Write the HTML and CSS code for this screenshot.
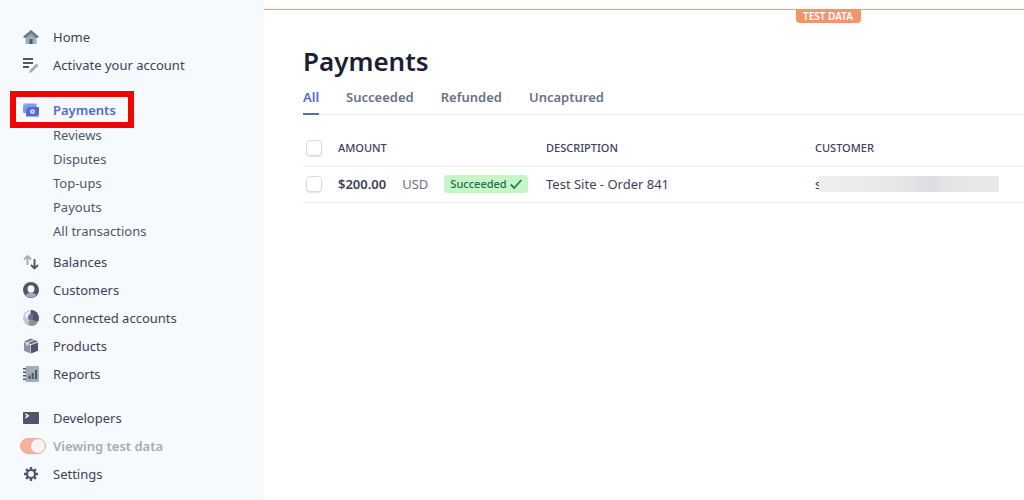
FILE: index.html
```html
<!DOCTYPE html>
<html lang="en">
<head>
<meta charset="utf-8">
<meta name="viewport" content="width=device-width, initial-scale=1">
<title>Payments</title>
<link rel="stylesheet" href="styles.css">
</head>
<body>
<div class="app">
  <nav class="sidebar" aria-label="Main">
    <ul class="group">
      <li><a class="item" href="#home">
        <svg class="icon" viewBox="0 0 16 16"><path fill="#a3acb9" d="M2.500 7h11v8h-11z"/><path fill="#697386" d="M8 1 15.500 7.200v1.600h-2.300L8 4.500 2.800 8.800H.5V7.200z"/><path fill="#4f566b" d="M6.500 15v-5h3v5z"/><path fill="#8792a2" d="M8 4.500l5.200 4.300h-2L8 6.500 4.800 8.800h-2z"/></svg>
        Home</a></li>
      <li><a class="item" href="#activate">
        <svg class="icon" viewBox="0 0 16 16"><path fill="#4f566b" d="M0 1h10v2H0zM0 5h10v2H0zM0 9h6v2H0z"/><path fill="#a3acb9" d="M13.500 6.500l2 2-6.500 6.500-3 1 1-3z"/></svg>
        Activate your account</a></li>
    </ul>
    <ul class="group">
      <li class="highlight"><a class="item item-active" href="#payments" aria-current="page">
        <svg class="icon" viewBox="0 0 16 16"><rect x="0" y="1.500" width="13.500" height="9.500" rx="1" fill="#7f9cf0"/><path fill="#b3c6fa" d="M0 1.500h3L0 4.500z"/><rect x="3" y="5" width="13" height="9.500" rx="1" fill="#5469d4"/><circle cx="9.500" cy="9.700" r="2.400" fill="#d6e0ff"/><circle cx="9.500" cy="9.700" r=".8" fill="#5469d4"/><path fill="#8ba4f3" d="M3 5h2.500L3 7.500zM16 14.500h-2.500l2.500-2.500z"/></svg>
        Payments</a></li>
      <li><a class="subitem" href="#reviews">Reviews</a></li>
      <li><a class="subitem" href="#disputes">Disputes</a></li>
      <li><a class="subitem" href="#topups">Top-ups</a></li>
      <li><a class="subitem" href="#payouts">Payouts</a></li>
      <li><a class="subitem" href="#transactions">All transactions</a></li>
    </ul>
    <ul class="group group-near">
      <li><a class="item" href="#balances">
        <svg class="icon" viewBox="0 0 16 16" fill="none" stroke-width="1.900"><path stroke="#a3acb9" d="M4.500 11V2M1 5.500 4.500 2 8 5.500"/><path stroke="#4f566b" d="M11.500 5v9.500M8 11l3.500 3.500L15 11"/></svg>
        Balances</a></li>
      <li><a class="item" href="#customers">
        <svg class="icon" viewBox="0 0 16 16"><circle cx="8" cy="8" r="8" fill="#4f566b"/><path fill="#a3acb9" d="M2.500 13.300C3.500 11.600 5.500 11 8 11s4.500.6 5.500 2.300A8 8 0 0 1 2.500 13.300z"/><ellipse cx="8" cy="7" rx="3.400" ry="3.700" fill="#f7fafc"/></svg>
        Customers</a></li>
      <li><a class="item" href="#accounts">
        <svg class="icon" viewBox="0 0 16 16"><circle cx="8" cy="8" r="8" fill="#c1c9d2"/><path fill="#4f566b" d="M8 0a8 8 0 0 1 7 11.800L10 10.500 7.500 8.500z"/><path fill="#8792a2" d="M10 10.500l5 1.300A8 8 0 0 1 8 16l-3-2 1-3z"/><path fill="#697386" d="M5 4.500h5v6H6.500L5 8z"/><path fill="#edf1f6" d="M1.500 6A7 7 0 0 1 7 1.300L6 4.500 4.500 8z"/></svg>
        Connected accounts</a></li>
      <li><a class="item" href="#products">
        <svg class="icon" viewBox="0 0 16 16"><path fill="#8792a2" d="M1 4.500 7.500 7v8.500L1 12.800z"/><path fill="#4f566b" d="M15 4.500 8 7v8.500l7-2.700z"/><path fill="#697386" d="M8 .5l7 2.900L8 6.200 1 3.400z"/><path stroke="#dfe5ec" stroke-width="1.200" fill="none" d="M4 8V4.800l7-3"/></svg>
        Products</a></li>
      <li><a class="item" href="#reports">
        <svg class="icon" viewBox="0 0 16 16"><rect x="2.500" width="13.500" height="16" rx="1" fill="#a3acb9"/><path fill="#4f566b" d="M0 2h3v1.500H0zM0 5.500h3V7H0zM0 9h3v1.500H0zM0 12.500h3V14H0zM5.500 9.500h2V13h-2zM8.700 7h2v6h-2zM12 4h2v9h-2z"/></svg>
        Reports</a></li>
    </ul>
    <ul class="group">
      <li><a class="item" href="#developers">
        <svg class="icon" viewBox="0 0 16 16"><rect y="2" width="16" height="12" rx="1" fill="#4f566b"/><path fill="none" stroke="#f7fafc" stroke-width="1.400" d="M2.300 3.800 5.300 5.800l-3 2"/></svg>
        Developers</a></li>
      <li><label class="item item-test"><input class="switch" type="checkbox" role="switch" checked>Viewing test data</label></li>
      <li><a class="item" href="#settings">
        <svg class="icon" viewBox="0 0 16 16" fill="none" stroke="#4f566b"><circle cx="8" cy="8" r="4" stroke-width="2.200"/><path stroke-width="2.400" d="M8 1v3M8 12v3M1 8h3M12 8h3M3.050 3.050l2 2M10.950 10.950l2 2M12.950 3.050l-2 2M5.050 10.950l-2 2"/></svg>
        Settings</a></li>
    </ul>
  </nav>
  <main class="main">
    <div class="testbar"><span class="testbadge">TEST DATA</span></div>
    <div class="content">
      <h1 class="title">Payments</h1>
      <div class="tabs" role="tablist">
        <button class="tab tab-active" role="tab" aria-selected="true">All</button>
        <button class="tab" role="tab" aria-selected="false">Succeeded</button>
        <button class="tab" role="tab" aria-selected="false">Refunded</button>
        <button class="tab" role="tab" aria-selected="false">Uncaptured</button>
      </div>
      <table class="table">
        <colgroup><col class="col-check"><col class="col-amount"><col class="col-desc"><col></colgroup>
        <thead>
          <tr><th><input class="check" type="checkbox" aria-label="Select all payments"></th><th>AMOUNT</th><th>DESCRIPTION</th><th>CUSTOMER</th></tr>
        </thead>
        <tbody>
          <tr>
            <td><input class="check" type="checkbox" aria-label="Select payment of $200.00"></td>
            <td><div class="amount"><strong class="value">$200.00</strong><span class="currency">USD</span><span class="status">Succeeded <svg class="tick" viewBox="0 0 12 12"><path fill="none" stroke="#1f7f50" stroke-width="1.800" d="M.8 6.500 4.200 10 11.300 2"/></svg></span></div></td>
            <td>Test Site - Order 841</td>
            <td><div class="customer">s<span class="redacted"></span></div></td>
          </tr>
        </tbody>
      </table>
    </div>
  </main>
</div>
</body>
</html>
```
FILE: styles.css
```css
* { box-sizing: border-box; }

body {
  margin: 0;
  background: #fff;
  color: #3c4257;
  font: 13px/20px "Noto Sans", "Open Sans", sans-serif;
}

.app {
  display: flex;
  min-height: 100vh;
}

.sidebar {
  display: flex;
  flex-direction: column;
  flex: 0 0 264px;
  padding-top: 23px;
  background: #f6fafd;
}

.group {
  margin: 0 0 16px;
  padding: 0;
  list-style: none;
}

.group-near { margin-top: -11px; }

.item {
  display: flex;
  align-items: center;
  gap: 14px;
  height: 28px;
  padding-left: 23px;
  color: #3c4257;
  text-decoration: none;
}

.icon {
  flex: none;
  width: 16px;
  height: 16px;
}

.highlight {
  width: 124px;
  margin: -4px 0 -5px 10px;
  border: 6px solid #f00404;
}

.highlight .item {
  height: 25px;
  padding-left: 7px;
}

.item-active {
  color: #5469d4;
  font-weight: 600;
}

.item-test {
  gap: 7px;
  padding-left: 20px;
  color: #a3acb9;
  font-weight: 600;
}

.switch {
  flex: none;
  appearance: none;
  display: flex;
  justify-content: flex-end;
  width: 26px;
  height: 16px;
  margin: 0;
  border: 1px solid #f3aa96;
  border-radius: 8px;
  background: #f9b09c;
}

.switch::before {
  content: "";
  width: 14px;
  height: 14px;
  border-radius: 50%;
  background: #f7f4f5;
}

.subitem {
  display: block;
  padding-left: 53px;
  color: #4f566b;
  line-height: 24px;
  text-decoration: none;
}

.main {
  flex: 1;
  min-width: 0;
}

.testbar {
  display: flex;
  justify-content: center;
  height: 23px;
  padding: 9px 0 0 368px;
  background: linear-gradient(#fff 7px, #fdf3ea 8px, #fdf3ea 9px, #e3a98a 9px, #e3a98a 10px, #fff 10px);
}

.testbadge {
  width: 65px;
  border-radius: 0 0 4px 4px;
  background: #f0966a;
  color: #fff;
  font-size: 10px;
  font-weight: 600;
  line-height: 15px;
  text-align: center;
}

.content { padding: 20px 0 0 39px; }

.title {
  margin: 0;
  color: #1a1f36;
  font-size: 26px;
  font-weight: 600;
  line-height: 36px;
}

.tabs {
  display: flex;
  gap: 27px;
  margin-top: 8px;
  border-bottom: 1px solid #e3e8ee;
}

.tab {
  height: 28px;
  margin-bottom: -1px;
  padding: 0 0 6px;
  border: 0;
  border-bottom: 2px solid transparent;
  background: none;
  color: #697386;
  font: 600 13px/20px "Noto Sans", "Open Sans", sans-serif;
}

.tab-active {
  border-color: #5f6bb5;
  color: #5469d4;
}

.table {
  width: 100%;
  border-collapse: collapse;
  table-layout: fixed;
}

.col-check { width: 35px; }
.col-amount { width: 208px; }
.col-desc { width: 269px; }

.table th,
.table td {
  padding: 0;
  border-bottom: 1px solid #e8ebef;
  text-align: left;
  vertical-align: middle;
}

.table th {
  height: 51px;
  padding-top: 16px;
  color: #3c4257;
  font-size: 11px;
  font-weight: 500;
}

.table td { height: 36px; }

.check {
  appearance: none;
  display: block;
  width: 16px;
  height: 16px;
  margin: 0 0 0 3px;
  border: 1px solid #d8dbe0;
  border-radius: 4px;
  background: #fff;
  box-shadow: 0 1px 1px #e3e5e9;
}

.amount {
  display: flex;
  align-items: center;
}

.value {
  font-weight: 600;
}

.currency {
  margin: 0 16px;
  color: #697386;
}

.status {
  display: flex;
  align-items: center;
  gap: 3px;
  height: 18px;
  padding: 0 6px;
  border-radius: 4px;
  background: #c6f5c8;
  color: #1f6f50;
  font-size: 11px;
  font-weight: 500;
}

.tick {
  width: 12px;
  height: 12px;
}

.customer {
  display: flex;
  align-items: center;
}

.redacted {
  width: 180px;
  height: 16px;
  margin-left: -2px;
  background: linear-gradient(90deg, #eeeef0, #e7e7ea 45%, #dedee2 63%, #e6e6e9 75%, #e9e9ec);
}
```
